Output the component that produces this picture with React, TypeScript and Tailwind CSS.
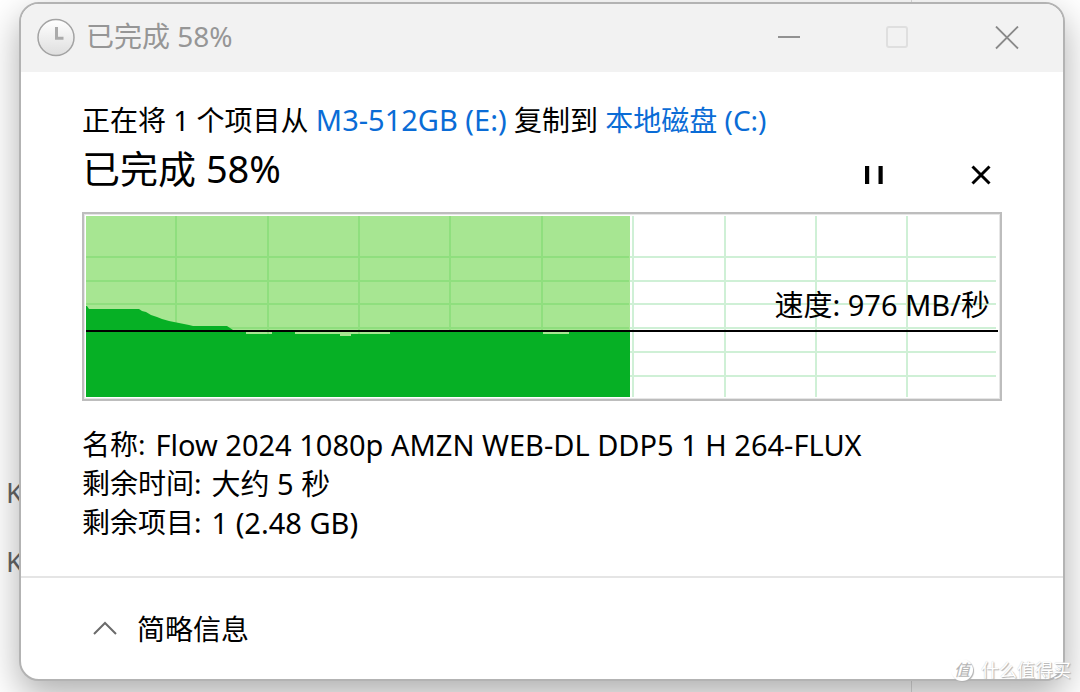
import type { ReactNode } from "react";

const VERTICAL_LINES = [89, 181, 272, 363, 455, 546, 638, 729, 820];
const HORIZONTAL_LINES = [40, 64, 87, 111, 135, 159];

const SPEED_AREA =
  "M0 182V90H1L3 93H53L56 95L60 96L65 99L71 101L76 103L83 105L93 107L103 109L107 110H141L147 114L149 116H160V118H186V116H209V118H254V120H265V118H304V116H457V118H483V116H544V182Z";

function ClockIcon() {
  return (
    <svg className="size-10 shrink-0" viewBox="0 0 40 40" aria-hidden="true">
      <defs>
        <linearGradient id="clock-face" x1="0" y1="0" x2="0" y2="1">
          <stop offset="0" stopColor="#ffffff" />
          <stop offset="1" stopColor="#dedede" />
        </linearGradient>
      </defs>
      <circle cx="20" cy="19.500" r="18" fill="url(#clock-face)" stroke="#a3a3a3" strokeWidth="1.500" />
      <path d="M20.500 9V20.200H27.500" fill="none" stroke="#aaaaaa" strokeWidth="3" />
    </svg>
  );
}

function SpeedChart() {
  return (
    <div className="relative border-2 border-[#bdbdbd] bg-white p-0.5 shadow-[inset_0_0_0_1px_#e6e6e6]">
      <svg
        className="block h-[181px] w-full"
        viewBox="0 0 912 181"
        preserveAspectRatio="none"
        role="img"
        aria-label="速度"
      >
        <g fill="#cff0d6">
          {VERTICAL_LINES.map((x) => (
            <rect key={x} x={x} y="0" width="2" height="181" />
          ))}
          {HORIZONTAL_LINES.map((y) => (
            <rect key={y} x="0" y={y} width="910" height="2" />
          ))}
        </g>
        <rect width="544" height="181" fill="#a7e692" />
        <g fill="#8fdf7e">
          {VERTICAL_LINES.slice(0, 5).map((x) => (
            <rect key={x} x={x} y="0" width="2" height="181" />
          ))}
          {HORIZONTAL_LINES.map((y) => (
            <rect key={y} x="0" y={y} width="543" height="2" />
          ))}
        </g>
        <path d={SPEED_AREA} fill="#06b025" />
        <rect y="114" width="912" height="2" fill="#000000" />
      </svg>
      <span className="absolute top-[73px] right-2.5 text-[29px] leading-9">速度: 976 MB/秒</span>
    </div>
  );
}

function Detail({ label, children }: { label: string; children: ReactNode }) {
  return (
    <div className="flex gap-2.5">
      <dt>{label}</dt>
      <dd className="text-[29px]">{children}</dd>
    </div>
  );
}

function Watermark() {
  return (
    <div className="absolute right-[9px] bottom-2.5 flex items-center gap-2 text-lg leading-6 text-white [text-shadow:1px_1px_1px_#b0b0b0,0_0_1px_#c4c4c4]">
      <span className="flex size-[22px] items-center justify-center rounded-full bg-white text-base text-[#b5b5b5] italic shadow-[1px_1px_1px_#b0b0b0] [text-shadow:none]">
        值
      </span>
      <span>什么值得买</span>
    </div>
  );
}

export default function App() {
  return (
    <div className="relative flex min-h-screen flex-col overflow-hidden bg-white pt-0.5 pr-[15px] pb-[11px] pl-[19px] font-['Noto_Sans','Noto_Sans_CJK_SC',sans-serif] text-[28px] leading-10 text-black">
      <div className="absolute top-0 bottom-0 left-[911px] w-px bg-[#dddddd]" />
      <div className="absolute top-[472px] left-1.5 flex flex-col gap-[29px] text-[#666666]">
        <span>K</span>
        <span>K</span>
      </div>

      <section className="relative flex flex-1 flex-col overflow-hidden rounded-[20px] border-2 border-[#b3b3b3] bg-white shadow-[0_14px_36px_rgba(0,0,0,0.32)]">
        <header className="flex h-[68px] items-center bg-[#f2f2f2] pl-[15px] text-[#969696]">
          <ClockIcon />
          <h1 className="ml-2.5 flex-1 pb-1">已完成 58%</h1>
          <button aria-label="最小化" className="flex w-[108px] justify-center">
            <svg className="size-6" viewBox="0 0 24 24">
              <path d="M1 11H23" stroke="#929292" strokeWidth="2" />
            </svg>
          </button>
          <button aria-label="最大化" disabled className="flex w-[108px] justify-center">
            <svg className="size-6" viewBox="0 0 24 24" fill="none">
              <rect x="2" y="1" width="20" height="20" rx="2" stroke="#dfdfdf" strokeWidth="2" />
            </svg>
          </button>
          <button aria-label="关闭" className="flex w-28 justify-center">
            <svg className="size-6" viewBox="0 0 24 24">
              <path d="M1 .5L23 22.500M23 .5L1 22.500" stroke="#8a8a8a" strokeWidth="1.800" />
            </svg>
          </button>
        </header>

        <main className="flex-1 pt-7 pr-[61px] pl-[61px]">
          <p>
            正在将 1 个项目从{" "}
            <a href="#source" className="text-[29px] text-[#0a6cd6]">
              M3-512GB (E:)
            </a>{" "}
            复制到{" "}
            <a href="#target" className="text-[#0a6cd6]">
              本地磁盘 (C:)
            </a>
          </p>
          <div className="flex items-center">
            <h2 className="flex-1 pb-1 text-[38px] leading-[56px]">已完成 58%</h2>
            <button aria-label="暂停" className="flex w-28 justify-center pt-2.5">
              <svg className="size-6" viewBox="0 0 24 24">
                <path d="M3 3H7.200V21H3ZM16.500 3H20.700V21H16.500Z" fill="#000000" />
              </svg>
            </button>
            <button aria-label="取消" className="flex w-[72px] justify-center pt-2.5 pl-[30px]">
              <svg className="size-6" viewBox="0 0 24 24">
                <path d="M3.500 3.500L20.500 20.500M20.500 3.500L3.500 20.500" stroke="#000000" strokeWidth="3" />
              </svg>
            </button>
          </div>
          <div className="pt-3">
            <SpeedChart />
          </div>
          <dl className="pt-6 leading-[39px]">
            <Detail label="名称:">Flow 2024 1080p AMZN WEB-DL DDP5 1 H 264-FLUX</Detail>
            <Detail label="剩余时间:">大约 5 秒</Detail>
            <Detail label="剩余项目:">1 (2.48 GB)</Detail>
          </dl>
        </main>

        <footer className="flex h-[103px] items-center border-t-2 border-[#e5e5e5] pl-[70px]">
          <button className="flex items-center gap-[18px]">
            <svg className="size-7" viewBox="0 0 28 28" fill="none">
              <path d="M3 19L14 8L25 19" stroke="#6b6b6b" strokeWidth="2" />
            </svg>
            简略信息
          </button>
        </footer>
      </section>

      <Watermark />
    </div>
  );
}
